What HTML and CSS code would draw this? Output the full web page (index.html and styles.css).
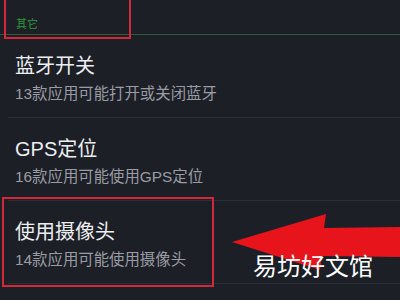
FILE: index.html
```html
<!DOCTYPE html>
<html lang="zh-CN">
<head>
    <meta charset="UTF-8">
    <meta name="viewport" content="width=device-width, initial-scale=1.0">
    <title>其它</title>
    <link rel="stylesheet" href="styles.css">
</head>
<body>
    <div class="screen">
        <div class="section-head">其它</div>

        <div class="item">
            <div class="title">蓝牙开关</div>
            <div class="desc">13款应用可能打开或关闭蓝牙</div>
        </div>
        <div class="item">
            <div class="title">GPS定位</div>
            <div class="desc">16款应用可能使用GPS定位</div>
        </div>
        <div class="item">
            <div class="title">使用摄像头</div>
            <div class="desc">14款应用可能使用摄像头</div>
        </div>

        <!-- annotations drawn over the screenshot -->
        <div class="mark mark-head"></div>
        <div class="mark mark-camera"></div>
        <svg class="arrow" width="170" height="60" viewBox="230 212 170 60">
            <polygon points="232,242 326,214 324,228 400,227 400,257 322,256 320,270" fill="#e8141c" />
        </svg>
        <div class="watermark">易坊好文馆</div>
    </div>
</body>
</html>
```

FILE: styles.css
```css
body {
    margin: 0;
    background: #1d1f27;
    font-family: "Liberation Sans", "Noto Sans CJK SC", sans-serif;
}

.screen {
    position: relative;
    width: 400px;
    height: 300px;
    overflow: hidden;
    background: #1d1f27;
}

.section-head {
    height: 35px;
    box-sizing: border-box;
    padding: 17px 0 0 16px;
    font-size: 11px;
    line-height: 14px;
    color: #2f9a38;
    border-bottom: 1px solid #2e5a3a;
}

.item {
    height: 83px;
    box-sizing: border-box;
    margin-left: 8px;
    padding: 19px 0 0 7px;
    border-bottom: 1px solid #2c2f38;
}

.title {
    font-size: 20px;
    line-height: 24px;
    color: #eceef0;
}

.desc {
    margin-top: 6px;
    font-size: 15.4px;
    line-height: 20px;
    color: #9a9ca3;
}

.mark {
    position: absolute;
    border: 2px solid #d3283a;
}

.mark-head {
    left: 4px;
    top: -3px;
    width: 123px;
    height: 38px;
}

.mark-camera {
    left: 2px;
    top: 197px;
    width: 208px;
    height: 86px;
}

.arrow {
    position: absolute;
    left: 230px;
    top: 212px;
}

.watermark {
    position: absolute;
    left: 253px;
    top: 252px;
    font-size: 24px;
    line-height: 30px;
    color: #ffffff;
}
```
